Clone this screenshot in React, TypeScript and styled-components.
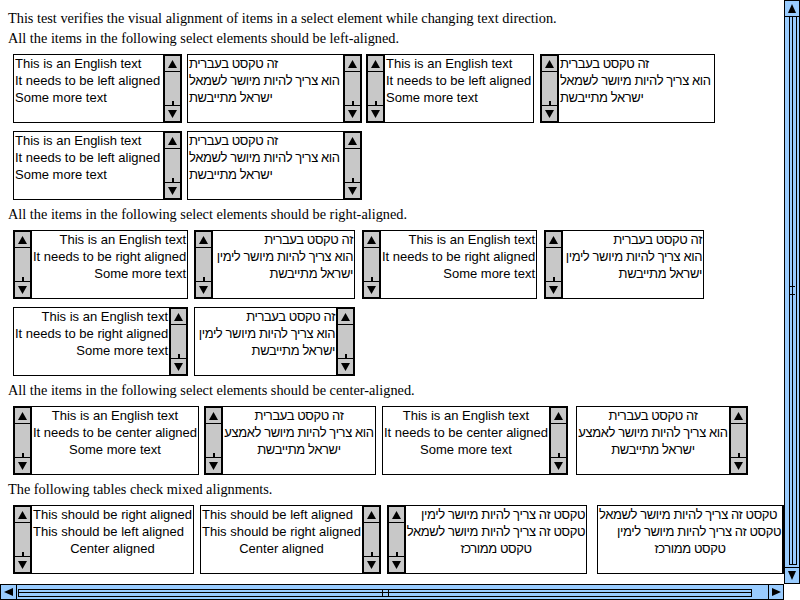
import React from 'react';
import styled, { createGlobalStyle } from 'styled-components';

const GlobalStyle = createGlobalStyle`
  html, body {
    margin: 0;
    padding: 0;
    background: #fff;
    overflow: hidden;
  }
`;

const BLUE = '#99ccff';
const GRAY = '#c8c8c8';

type Side = 'left' | 'right';
type Align = 'left' | 'right' | 'center';

interface Item {
  text: string;
  align: Align;
  rtl?: boolean;
}

interface BoxSpec {
  w: number;
  ml: number;
  sb: Side;
  items: Item[];
}

const Viewport = styled.div`
  display: grid;
  grid-template-columns: 784px 16px;
  grid-template-rows: 584px 16px;
  width: 800px;
  height: 600px;
  background: #fff;
`;

const Page = styled.div`
  min-width: 0;
  overflow: hidden;
  padding: 8px 0 0 8px;
  font-family: "Liberation Serif", "Times New Roman", serif;
  font-size: 14.3px;
  line-height: 20px;
  color: #000;
`;

const TextLine = styled.div<{ $mt?: number }>`
  margin-top: ${({ $mt }) => $mt || 0}px;
  white-space: nowrap;
`;

const Group = styled.div`
  display: flex;
  flex-direction: column;
  gap: 8px;
  margin-top: 6px;
  padding-left: 5px;
`;

const BoxRow = styled.div`
  display: flex;
  flex-wrap: nowrap;
`;

const ListBox = styled.div<{ $w: number; $ml: number; $sb: Side }>`
  flex: none;
  display: flex;
  flex-direction: ${({ $sb }) => ($sb === 'left' ? 'row-reverse' : 'row')};
  width: ${({ $w }) => $w}px;
  height: 69px;
  margin-left: ${({ $ml }) => $ml}px;
  box-sizing: border-box;
  border: 1px solid #000;
  background: #fff;
  font-family: "Liberation Sans", Arial, sans-serif;
  font-size: 13px;
  color: #000;
`;

const Options = styled.div`
  flex: 1;
  min-width: 0;
  padding: 0 1px;
`;

const Option = styled.div<{ $align: Align; $rtl?: boolean }>`
  height: 17px;
  line-height: 17px;
  white-space: nowrap;
  text-align: ${({ $align }) => $align};
  letter-spacing: ${({ $rtl }) => ($rtl ? '-0.4px' : '0')};
`;

const ScrollBar = styled.div<{ $side: Side }>`
  flex: none;
  display: flex;
  flex-direction: column;
  width: 18px;
  box-sizing: border-box;
  border: 1px solid #000;
  border-${({ $side }) => ($side === 'right' ? 'left' : 'right')}-width: 2px;
  background: ${GRAY};
`;

const ArrowButton = styled.div<{ $end: 'top' | 'bottom' }>`
  flex: none;
  height: 16px;
  box-sizing: border-box;
  display: flex;
  align-items: center;
  justify-content: center;
  border-${({ $end }) => ($end === 'top' ? 'bottom' : 'top')}: 1px solid #000;
`;

const Track = styled.div`
  flex: 1;
  display: flex;
  flex-direction: column;
  justify-content: flex-end;
  align-items: center;
`;

const Stub = styled.div`
  width: 2px;
  height: 4px;
  background: #000;
`;

const PageVBar = styled.div`
  display: flex;
  flex-direction: column;
  background: ${BLUE};
`;

const PageHBar = styled.div`
  display: flex;
  background: ${BLUE};
`;

const PageButton = styled.div<{ $w: number; $h: number }>`
  flex: none;
  width: ${({ $w }) => $w}px;
  height: ${({ $h }) => $h}px;
  box-sizing: border-box;
  border: 1px solid #000;
  background: ${BLUE};
  display: flex;
  align-items: center;
  justify-content: center;
`;

const VTrack = styled.div`
  flex: 1;
  display: flex;
  border-left: 1px solid #000;
  border-right: 1px solid #000;
  padding: 0 2px 2px 4px;
`;

const VThumb = styled.div`
  flex: 1;
  display: flex;
  align-items: center;
  border-left: 1px solid #000;
  border-right: 1px solid #000;
  border-bottom: 1px solid #000;
  background: linear-gradient(#000, #000) no-repeat 2px 0 / 1px 100%;
`;

const HTrack = styled.div`
  flex: 1;
  display: flex;
  border-top: 1px solid #000;
  border-bottom: 1px solid #000;
  padding: 4px 16px 2px 1px;
`;

const HThumb = styled.div`
  flex: 1;
  display: flex;
  justify-content: center;
  border: 1px solid #000;
  background: linear-gradient(#000, #000) no-repeat 0 2px / 100% 1px;
`;

const Corner = styled.div`
  background: #fff;
`;

const Tri = ({ dir, w = 9, h = 8 }: { dir: 'up' | 'down' | 'left' | 'right'; w?: number; h?: number }) => {
  const pts = {
    up: `${w / 2},0 ${w},${h} 0,${h}`,
    down: `0,0 ${w},0 ${w / 2},${h}`,
    left: `0,${h / 2} ${w},0 ${w},${h}`,
    right: `0,0 ${w},${h / 2} 0,${h}`,
  }[dir];
  return (
    <svg width={w} height={h} viewBox={`0 0 ${w} ${h}`}>
      <polygon points={pts} fill="#000" />
    </svg>
  );
};

const VGrip = () => (
  <svg width="5" height="9" viewBox="0 0 5 9" shapeRendering="crispEdges">
    <rect x="0" y="0" width="5" height="1" fill="#000" />
    <rect x="2" y="0" width="1" height="9" fill="#000" />
    <rect x="0" y="8" width="5" height="1" fill="#000" />
  </svg>
);

const HGrip = () => (
  <svg width="7" height="6" viewBox="0 0 7 6" shapeRendering="crispEdges">
    <rect x="0" y="0" width="1" height="6" fill="#000" />
    <rect x="0" y="2" width="7" height="1" fill="#000" />
    <rect x="6" y="0" width="1" height="6" fill="#000" />
  </svg>
);

const MiniScroll = ({ side }: { side: Side }) => (
  <ScrollBar $side={side}>
    <ArrowButton $end="top">
      <Tri dir="up" />
    </ArrowButton>
    <Track>
      <Stub />
    </Track>
    <ArrowButton $end="bottom">
      <Tri dir="down" />
    </ArrowButton>
  </ScrollBar>
);

const Select = ({ spec }: { spec: BoxSpec }) => (
  <ListBox $w={spec.w} $ml={spec.ml} $sb={spec.sb}>
    <Options>
      {spec.items.map((it, i) => (
        <Option key={i} $align={it.align} $rtl={it.rtl} dir={it.rtl ? 'rtl' : 'ltr'}>
          {it.text}
        </Option>
      ))}
    </Options>
    <MiniScroll side={spec.sb} />
  </ListBox>
);

const en = (second: string, align: Align): Item[] => [
  { text: 'This is an English text', align },
  { text: second, align },
  { text: 'Some more text', align },
];

const he = (second: string, align: Align): Item[] => [
  { text: 'זה טקסט בעברית', align, rtl: true },
  { text: second, align, rtl: true },
  { text: 'ישראל מתייבשת', align, rtl: true },
];

const EN_L = en('It needs to be left aligned', 'left');
const HE_L = he('הוא צריך להיות מיושר לשמאל', 'left');
const EN_R = en('It needs to be right aligned', 'right');
const HE_R = he('הוא צריך להיות מיושר לימין', 'right');
const EN_C = en('It needs to be center aligned', 'center');
const HE_C = he('הוא צריך להיות מיושר לאמצע', 'center');

const MIX_1: Item[] = [
  { text: 'This should be right aligned', align: 'right' },
  { text: 'This should be left aligned', align: 'left' },
  { text: 'Center aligned', align: 'center' },
];
const MIX_2: Item[] = [
  { text: 'This should be left aligned', align: 'left' },
  { text: 'This should be right aligned', align: 'right' },
  { text: 'Center aligned', align: 'center' },
];
const MIX_3: Item[] = [
  { text: 'טקסט זה צריך להיות מיושר לימין', align: 'right', rtl: true },
  { text: 'טקסט זה צריך להיות מיושר לשמאל', align: 'left', rtl: true },
  { text: 'טקסט ממורכז', align: 'center', rtl: true },
];
const MIX_4: Item[] = [
  { text: 'טקסט זה צריך להיות מיושר לשמאל', align: 'left', rtl: true },
  { text: 'טקסט זה צריך להיות מיושר לימין', align: 'right', rtl: true },
  { text: 'טקסט ממורכז', align: 'center', rtl: true },
];

const sections: { title: string; rows: BoxSpec[][] }[] = [
  {
    title: 'All the items in the following select elements should be left-aligned.',
    rows: [
      [
        { w: 169, ml: 0, sb: 'right', items: EN_L },
        { w: 175, ml: 5, sb: 'right', items: HE_L },
        { w: 168, ml: 4, sb: 'left', items: EN_L },
        { w: 175, ml: 6, sb: 'left', items: HE_L },
      ],
      [
        { w: 169, ml: 0, sb: 'right', items: EN_L },
        { w: 175, ml: 5, sb: 'right', items: HE_L },
      ],
    ],
  },
  {
    title: 'All the items in the following select elements should be right-aligned.',
    rows: [
      [
        { w: 175, ml: 0, sb: 'left', items: EN_R },
        { w: 161, ml: 6, sb: 'left', items: HE_R },
        { w: 175, ml: 7, sb: 'left', items: EN_R },
        { w: 160, ml: 7, sb: 'left', items: HE_R },
      ],
      [
        { w: 175, ml: 0, sb: 'right', items: EN_R },
        { w: 161, ml: 6, sb: 'right', items: HE_R },
      ],
    ],
  },
  {
    title: 'All the items in the following select elements should be center-aligned.',
    rows: [
      [
        { w: 186, ml: 0, sb: 'left', items: EN_C },
        { w: 172, ml: 5, sb: 'left', items: HE_C },
        { w: 186, ml: 6, sb: 'right', items: EN_C },
        { w: 172, ml: 8, sb: 'right', items: HE_C },
      ],
    ],
  },
  {
    title: 'The following tables check mixed alignments.',
    rows: [
      [
        { w: 181, ml: 0, sb: 'left', items: MIX_1 },
        { w: 181, ml: 6, sb: 'right', items: MIX_2 },
        { w: 200, ml: 6, sb: 'left', items: MIX_3 },
        { w: 204, ml: 10, sb: 'right', items: MIX_4 },
      ],
    ],
  },
];

export default function App() {
  return (
    <>
      <GlobalStyle />
      <Viewport>
        <Page>
          <TextLine>
            This test verifies the visual alignment of items in a select element while changing text direction.
          </TextLine>
          {sections.map((s, si) => (
            <React.Fragment key={si}>
              <TextLine $mt={si === 0 ? 0 : 4}>{s.title}</TextLine>
              <Group>
                {s.rows.map((row, ri) => (
                  <BoxRow key={ri}>
                    {row.map((b, bi) => (
                      <Select key={bi} spec={b} />
                    ))}
                  </BoxRow>
                ))}
              </Group>
            </React.Fragment>
          ))}
        </Page>

        <PageVBar>
          <PageButton $w={16} $h={17}>
            <Tri dir="up" w={8} h={9} />
          </PageButton>
          <VTrack>
            <VThumb>
              <VGrip />
            </VThumb>
          </VTrack>
          <PageButton $w={16} $h={17}>
            <Tri dir="down" w={8} h={9} />
          </PageButton>
        </PageVBar>

        <PageHBar>
          <PageButton $w={17} $h={16}>
            <Tri dir="left" w={9} h={8} />
          </PageButton>
          <HTrack>
            <HThumb>
              <HGrip />
            </HThumb>
          </HTrack>
          <PageButton $w={16} $h={16}>
            <Tri dir="right" w={9} h={8} />
          </PageButton>
        </PageHBar>
        <Corner />
      </Viewport>
    </>
  );
}
